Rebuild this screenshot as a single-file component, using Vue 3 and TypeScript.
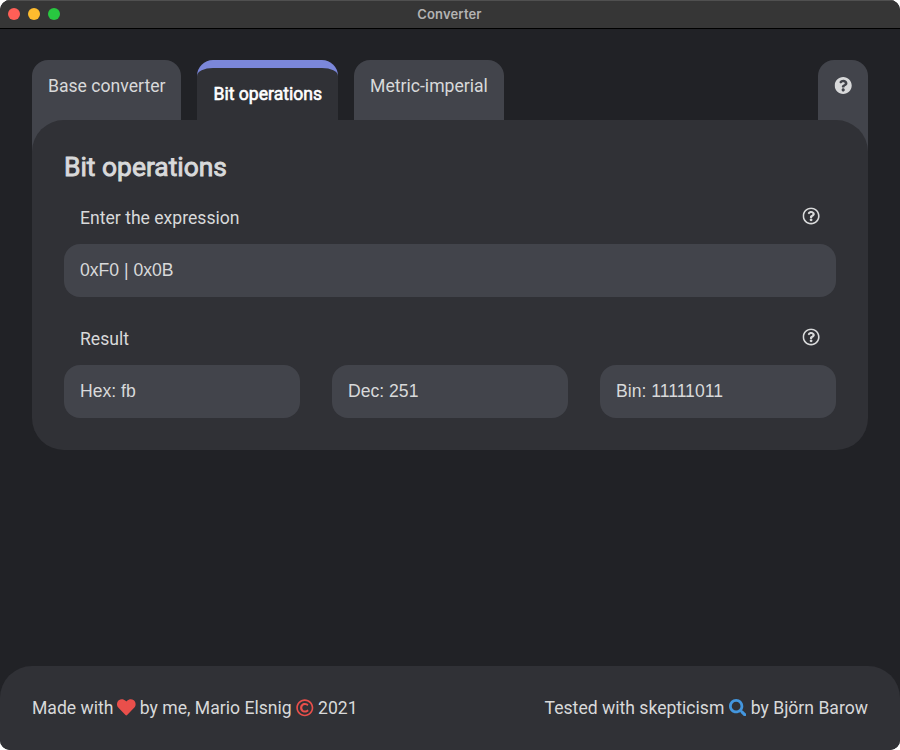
<script setup lang="ts">
import { ref, computed } from 'vue'

const tabs: string[] = ['Base converter', 'Bit operations', 'Metric-imperial']
const active = ref(1)
const expression = ref('0xF0 | 0x0B')

const value = computed<number>(() => {
  const m = expression.value.match(/^\s*(\w+)\s*([|&^])\s*(\w+)\s*$/)
  if (!m) return 0
  const a = Number(m[1])
  const b = Number(m[3])
  return m[2] === '|' ? a | b : m[2] === '&' ? a & b : a ^ b
})

const results = computed<string[]>(() => [
  `Hex: ${value.value.toString(16)}`,
  `Dec: ${value.value}`,
  `Bin: ${value.value.toString(2)}`,
])

const icons = {
  helpSolid:
    'M504 256c0 136.997-111.043 248-248 248S8 392.997 8 256C8 119.083 119.043 8 256 8s248 111.083 248 248zM262.655 90c-54.497 0-89.255 22.957-116.549 63.758-3.536 5.286-2.353 12.415 2.715 16.258l34.699 26.31c5.205 3.947 12.621 3.008 16.665-2.122 17.864-22.658 30.113-35.797 57.303-35.797 20.429 0 45.698 13.148 45.698 32.958 0 14.976-12.363 22.667-32.534 33.976C247.128 238.528 216 254.941 216 296v4c0 6.627 5.373 12 12 12h56c6.627 0 12-5.373 12-12v-1.333c0-28.462 83.186-29.647 83.186-106.667 0-58.002-60.165-102-116.531-102zM256 338c-25.365 0-46 20.635-46 46 0 25.364 20.635 46 46 46s46-20.636 46-46c0-25.365-20.635-46-46-46z',
  help:
    'M256 8C119.043 8 8 119.083 8 256c0 136.997 111.043 248 248 248s248-111.003 248-248C504 119.083 392.957 8 256 8zm0 448c-110.532 0-200-89.431-200-200 0-110.495 89.472-200 200-200 110.491 0 200 89.471 200 200 0 110.53-89.431 200-200 200zm107.244-255.2c0 67.052-72.421 68.084-72.421 92.863V300c0 6.627-5.373 12-12 12h-45.647c-6.627 0-12-5.373-12-12v-8.659c0-35.745 27.1-50.034 47.579-61.516 17.561-9.845 28.324-16.541 28.324-29.579 0-17.246-21.999-28.693-39.784-28.693-23.189 0-33.894 10.977-48.942 29.969-4.057 5.12-11.46 6.071-16.666 2.124l-27.824-21.098c-5.107-3.872-6.251-11.066-2.644-16.363C184.846 131.491 214.94 112 261.794 112c49.071 0 101.45 38.304 101.45 88.8zM298 368c0 23.159-18.841 42-42 42s-42-18.841-42-42 18.841-42 42-42 42 18.841 42 42z',
  heart:
    'M462.3 62.6C407.5 15.9 326 24.3 275.7 76.2L256 96.5l-19.7-20.3C186.1 24.3 104.5 15.9 49.7 62.6c-62.8 53.6-66.1 149.8-9.9 207.9l193.5 199.8c12.5 12.9 32.8 12.9 45.3 0l193.5-199.8c56.3-58.1 53-154.3-9.8-207.9z',
  copyright:
    'M256 8C119.033 8 8 119.033 8 256s111.033 248 248 248 248-111.033 248-248S392.967 8 256 8zm0 448c-110.532 0-200-89.451-200-200 0-110.531 89.451-200 200-200 110.532 0 200 89.451 200 200 0 110.532-89.451 200-200 200zm107.351-101.064c-9.614 9.712-45.53 41.396-104.065 41.396-82.43 0-140.484-61.425-140.484-141.567 0-79.152 60.275-139.401 139.762-139.401 55.531 0 88.738 26.62 97.593 34.779a11.965 11.965 0 0 1 1.936 15.322l-18.155 28.113c-3.841 5.95-11.966 7.282-17.499 2.921-8.595-6.776-31.814-22.538-61.708-22.538-48.303 0-77.916 35.33-77.916 80.082 0 41.589 26.888 83.692 78.277 83.692 32.657 0 56.843-19.039 65.726-27.225 5.27-4.857 13.596-4.039 17.82 1.738l19.865 27.17a11.947 11.947 0 0 1-1.152 15.518z',
  search:
    'M505 442.7L405.3 343c-4.5-4.5-10.6-7-17-7H372c27.6-35.3 44-79.7 44-128C416 93.1 322.9 0 208 0S0 93.1 0 208s93.1 208 208 208c48.3 0 92.7-16.4 128-44v16.3c0 6.4 2.5 12.5 7 17l99.7 99.7c9.4 9.4 24.6 9.4 33.9 0l28.3-28.3c9.4-9.4 9.4-24.6.1-34zM208 336c-70.7 0-128-57.2-128-128 0-70.7 57.2-128 128-128 70.7 0 128 57.2 128 128 0 70.7-57.2 128-128 128z',
}
</script>

<template>
  <div class="window">
    <header class="titlebar">
      <div class="lights">
        <span class="light close"></span>
        <span class="light minimize"></span>
        <span class="light zoom"></span>
      </div>
      <span class="title">Converter</span>
    </header>

    <main class="content">
      <nav class="tabs">
        <button
          v-for="(tab, i) in tabs"
          :key="tab"
          class="tab"
          :class="{ active: i === active }"
          @click="active = i"
        >{{ tab }}</button>
        <button class="tab help">
          <svg class="icon" viewBox="0 0 512 512"><path :d="icons.helpSolid" /></svg>
        </button>
      </nav>

      <section class="card">
        <h2 class="heading">Bit operations</h2>
        <div class="label">
          <span>Enter the expression</span>
          <svg class="icon" viewBox="0 0 512 512"><path :d="icons.help" /></svg>
        </div>
        <input v-model="expression" class="field" type="text" />
        <div class="label result-label">
          <span>Result</span>
          <svg class="icon" viewBox="0 0 512 512"><path :d="icons.help" /></svg>
        </div>
        <div class="results">
          <div v-for="r in results" :key="r" class="field">{{ r }}</div>
        </div>
      </section>
    </main>

    <footer class="footer">
      <p class="credit">
        Made with
        <svg class="icon heart" viewBox="0 0 512 512"><path :d="icons.heart" /></svg>
        by me, Mario Elsnig
        <svg class="icon red" viewBox="0 0 512 512"><path :d="icons.copyright" /></svg>
        2021
      </p>
      <p class="credit">
        Tested with skepticism
        <svg class="icon blue" viewBox="0 0 512 512"><path :d="icons.search" /></svg>
        by Björn Barow
      </p>
    </footer>
  </div>
</template>

<style>
body {
  background: #fff;
}
</style>

<style scoped>
.window {
  box-sizing: border-box;
  width: 900px;
  height: 750px;
  display: flex;
  flex-direction: column;
  overflow: hidden;
  border-radius: 10px;
  background: #212226;
  color: #d8d9da;
  font: 17.6px/21px Roboto, sans-serif;
}
.titlebar {
  box-sizing: border-box;
  height: 29px;
  display: grid;
  grid-template-columns: 1fr auto 1fr;
  align-items: center;
  padding: 0 9px 1px 8px;
  background: #363636;
  border-top: 1px solid #505050;
  border-bottom: 1px solid #000;
}
.lights {
  display: flex;
  gap: 8px;
}
.light {
  width: 12px;
  height: 12px;
  border-radius: 50%;
}
.close {
  background: #ff5f57;
}
.minimize {
  background: #febc2e;
}
.zoom {
  background: #28c840;
}
.title {
  font: 600 13px/16px Inter, sans-serif;
  letter-spacing: 0.15px;
  color: #b3b3b3;
}
.content {
  flex: 1;
  padding: 31px 32px 0;
}
.tabs {
  display: flex;
  gap: 16px;
  height: 92px;
}
.tab {
  display: flex;
  align-items: flex-start;
  padding: 16px;
  border: 0;
  border-radius: 16px 16px 0 0;
  background: #42444b;
  color: inherit;
  font: inherit;
  line-height: 20px;
}
.tab:not(:first-child):not(.help) {
  height: 60px;
}
.tab.active {
  border-top: 8px solid #7b87da;
  background: #303136;
  color: #fff;
  -webkit-text-stroke: 0.6px currentColor;
}
.help {
  margin-left: auto;
}
.icon {
  width: 17.6px;
  height: 17.6px;
  fill: currentColor;
}
.help .icon {
  transform: translate(0.4px, 0.7px);
}
.card {
  position: relative;
  margin-top: -32px;
  padding: 32px;
  border-radius: 32px;
  background: #303136;
}
.heading {
  margin: 0 0 24px;
  font-size: 26.4px;
  line-height: 31px;
  font-weight: 400;
  -webkit-text-stroke: 0.9px currentColor;
}
.label {
  display: flex;
  justify-content: space-between;
  height: 21px;
  line-height: 23px;
  padding: 0 16px;
  margin-bottom: 16px;
}
.label .icon {
  transform: translate(0.3px, 0.2px);
}
.result-label {
  margin-top: 31px;
}
.field {
  display: block;
  box-sizing: border-box;
  width: 100%;
  height: 53px;
  padding: 16px;
  border: 0;
  border-radius: 16px;
  outline: none;
  background: #42444b;
  color: inherit;
  font: inherit;
  font-family: "Liberation Sans", Arial, sans-serif;
}
.results {
  display: grid;
  grid-template-columns: repeat(3, 1fr);
  gap: 32px;
}
.footer {
  display: flex;
  justify-content: space-between;
  height: 52px;
  padding: 32px 32px 0;
  border-radius: 32px 32px 0 0;
  background: #303136;
}
.credit {
  margin: 0;
  line-height: 20px;
}
.credit .icon {
  vertical-align: -2.2px;
}
.heart,
.red {
  color: #e94f4b;
}
.credit .heart {
  width: 18.6px;
  height: 18.6px;
  margin: 0 -0.5px;
}
.blue {
  color: #4396de;
}
</style>
